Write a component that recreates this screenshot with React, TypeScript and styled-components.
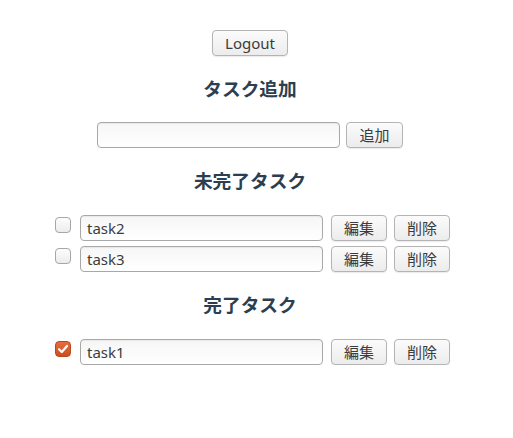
import React, { useState } from "react";
import styled, { createGlobalStyle } from "styled-components";

type Task = { id: number; name: string; done: boolean };

const GlobalStyle = createGlobalStyle`
  body {
    margin: 0;
    background: #ffffff;
    font-family: "Noto Sans", "Noto Sans CJK JP", sans-serif;
  }
`;

const Wrapper = styled.div`
  width: 500px;
  padding-top: 30px;
  display: flex;
  flex-direction: column;
  align-items: center;
  color: #2c3e50;
`;

const Button = styled.button`
  height: 26px;
  padding: 0 12px;
  border: 1px solid #b4b4b4;
  border-radius: 4px;
  background: linear-gradient(#fbfbfb, #ececec);
  box-shadow: 0 1px 1px rgba(0, 0, 0, 0.08);
  color: #3c3c3c;
  font-family: "Noto Sans", "Noto Sans CJK JP", sans-serif;
  font-size: 15px;
  line-height: 24px;
  white-space: nowrap;
`;

const Heading = styled.h3`
  margin: 22px 0;
  font-size: 18.72px;
  line-height: 22px;
  font-weight: bold;
  color: #2c3e50;
`;

const AddRow = styled.div`
  display: flex;
  align-items: center;
  gap: 6px;
`;

const TextInput = styled.input`
  box-sizing: border-box;
  width: 243px;
  height: 26px;
  padding: 0 6px;
  border: 1px solid #a8a8a8;
  border-radius: 4px;
  background: linear-gradient(#f6f6f6, #ffffff);
  box-shadow: inset 0 1px 1px rgba(0, 0, 0, 0.06);
  color: #3c3c3c;
  font-family: "Noto Sans", "Noto Sans CJK JP", sans-serif;
  font-size: 15px;
  outline: none;
`;

const TaskList = styled.div`
  display: flex;
  flex-direction: column;
  gap: 5px;
  padding-top: 1px;
`;

const TaskRow = styled.div`
  display: flex;
  align-items: flex-start;
  padding-left: 5px;
`;

const Check = styled.span<{ $checked: boolean }>`
  box-sizing: border-box;
  width: 16px;
  height: 16px;
  margin: 2px 9px 0 0;
  border-radius: 4px;
  border: 1px solid ${(p) => (p.$checked ? "#b24a22" : "#a6a6a6")};
  background: ${(p) =>
    p.$checked
      ? "linear-gradient(#e76d3d, #cc4f22)"
      : "linear-gradient(#fdfdfd, #ececec)"};
  display: flex;
  align-items: center;
  justify-content: center;
`;

const RowButtons = styled.div`
  display: flex;
  gap: 7px;
  margin-left: 8px;
`;

const initial: Task[] = [
  { id: 1, name: "task1", done: true },
  { id: 2, name: "task2", done: false },
  { id: 3, name: "task3", done: false },
];

const TaskItem = ({ task, onToggle }: { task: Task; onToggle: () => void }) => (
  <TaskRow>
    <Check $checked={task.done} onClick={onToggle}>
      {task.done && (
        <svg width="12" height="12" viewBox="0 0 12 12">
          <path
            d="M2 6.2 L4.8 9 L10 3"
            fill="none"
            stroke="#ffffff"
            strokeWidth="2.2"
            strokeLinecap="round"
            strokeLinejoin="round"
          />
        </svg>
      )}
    </Check>
    <TextInput defaultValue={task.name} />
    <RowButtons>
      <Button>編集</Button>
      <Button>削除</Button>
    </RowButtons>
  </TaskRow>
);

const App = () => {
  const [tasks, setTasks] = useState<Task[]>(initial);
  const [name, setName] = useState("");

  const toggle = (id: number) =>
    setTasks(tasks.map((t) => (t.id === id ? { ...t, done: !t.done } : t)));

  const addTask = () => {
    if (!name) return;
    setTasks([...tasks, { id: Date.now(), name: name, done: false }]);
    setName("");
  };

  return (
    <>
      <GlobalStyle />
      <Wrapper>
        <Button>Logout</Button>
        <Heading>タスク追加</Heading>
        <AddRow>
          <TextInput value={name} onChange={(e) => setName(e.target.value)} />
          <Button onClick={addTask}>追加</Button>
        </AddRow>
        <Heading>未完了タスク</Heading>
        <TaskList>
          {tasks
            .filter((t) => !t.done)
            .map((t) => (
              <TaskItem key={t.id} task={t} onToggle={() => toggle(t.id)} />
            ))}
        </TaskList>
        <Heading>完了タスク</Heading>
        <TaskList>
          {tasks
            .filter((t) => t.done)
            .map((t) => (
              <TaskItem key={t.id} task={t} onToggle={() => toggle(t.id)} />
            ))}
        </TaskList>
      </Wrapper>
    </>
  );
};

export default App;
